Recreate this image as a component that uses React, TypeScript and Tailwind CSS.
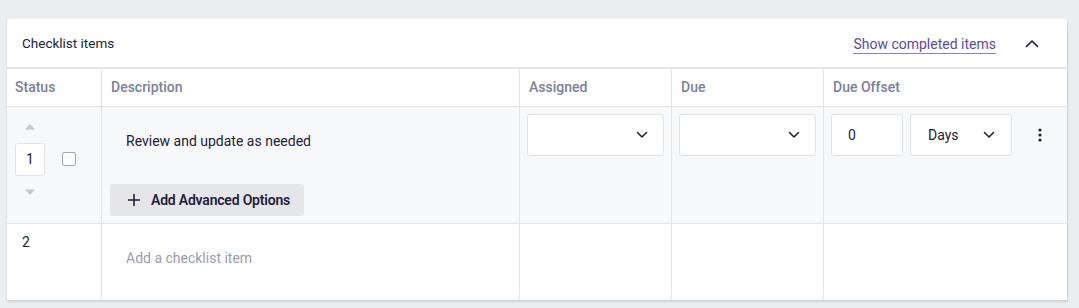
import React from "react";

const Chevron = () => (
  <svg width="12" height="8" viewBox="0 0 12 8" fill="none">
    <path d="M1.5 1.5 L6 6 L10.5 1.5" stroke="#22223a" strokeWidth="1.6" strokeLinecap="round" strokeLinejoin="round" />
  </svg>
);

export default function App() {
  const font = { fontFamily: "Roboto, 'Noto Sans', sans-serif" };
  return (
    <div className="w-[1079px] h-[308px] bg-[#ebeef0] pt-[19px] pl-[6px]" style={font}>
      <div className="w-[1061px] bg-white rounded-t-[4px] shadow-[1px_2px_2px_rgba(0,0,0,0.12)] border-l border-[#dfe1e4]">
        <div className="h-[50px] flex items-center pl-[15px] pr-[28px] border-b-2 border-[#e4e5e8]">
          <div className="text-[13.5px] text-[#22223a] flex-1">Checklist items</div>
          <div className="text-[14px] text-[#5b4a9e] border-b border-[#8f7fc8] leading-[18px] mt-[3px]">Show completed items</div>
          <div className="ml-[29px]">
            <svg width="14" height="9" viewBox="0 0 14 9" fill="none">
              <path d="M1.5 7.5 L7 2 L12.5 7.5" stroke="#22223a" strokeWidth="1.7" strokeLinecap="round" strokeLinejoin="round" />
            </svg>
          </div>
        </div>
        <div className="grid grid-cols-[95px_418px_152px_152px_243px] text-[14px] font-medium text-[#7a819a]">
          <div className="h-[37px] flex items-center pl-[8px] border-r border-[#e4e5e8]">Status</div>
          <div className="h-[37px] flex items-center pl-[9px] border-r border-[#e4e5e8]">Description</div>
          <div className="h-[37px] flex items-center pl-[9px] border-r border-[#e4e5e8]">Assigned</div>
          <div className="h-[37px] flex items-center pl-[9px] border-r border-[#e4e5e8]">Due</div>
          <div className="h-[37px] flex items-center pl-[9px]">Due Offset</div>
        </div>
        <div className="grid grid-cols-[95px_418px_152px_152px_243px] bg-[#f7f8fa] border-t border-[#e4e5e8] h-[117px]">
          <div className="border-r border-[#e4e5e8] flex items-start pl-[8px] pt-[16px] gap-[17px]">
            <div className="flex flex-col items-center gap-[13px]">
              <svg width="12" height="7" viewBox="0 0 12 7"><path d="M1 6.5 L6 1 L11 6.5 Z" fill="#c5c7cf" /></svg>
              <div className="w-[30px] h-[33px] bg-white border border-[#e2e3e7] rounded-[3px] flex items-center justify-center text-[14px] text-[#22223a]">1</div>
              <svg width="12" height="7" viewBox="0 0 12 7"><path d="M1 0.5 L6 6 L11 0.5 Z" fill="#c5c7cf" /></svg>
            </div>
            <div className="mt-[29px] w-[14px] h-[14px] border-[1.5px] border-[#a5a7b0] rounded-[2px] bg-white" />
          </div>
          <div className="border-r border-[#e4e5e8] pl-[8px] flex flex-col">
            <div className="pl-[16px] pt-[26px] text-[14px] text-[#22223a] leading-[16px]">Review and update as needed</div>
            <div className="mt-[35px] w-[194px] h-[32px] bg-[#e6e6ea] rounded-[2px] flex items-center pl-[17px] gap-[10px] text-[14px] font-semibold text-[#22223a]">
              <svg width="14" height="14" viewBox="0 0 14 14"><path d="M7 1 V13 M1 7 H13" stroke="#22223a" strokeWidth="1.6" /></svg>
              <span className="tracking-[-0.2px]">Add Advanced Options</span>
            </div>
          </div>
          <div className="border-r border-[#e4e5e8] px-[7px] pt-[7px]">
            <div className="h-[42px] bg-white border border-[#e2e3e7] rounded-[3px] flex items-center justify-end pr-[15px]"><Chevron /></div>
          </div>
          <div className="border-r border-[#e4e5e8] px-[7px] pt-[7px]">
            <div className="h-[42px] bg-white border border-[#e2e3e7] rounded-[3px] flex items-center justify-end pr-[15px]"><Chevron /></div>
          </div>
          <div className="pl-[7px] pt-[7px] flex items-start gap-[7px]">
            <div className="w-[72px] h-[42px] bg-white border border-[#e2e3e7] rounded-[3px] flex items-center pl-[16px] text-[14px] text-[#22223a]">0</div>
            <div className="w-[102px] h-[42px] bg-white border border-[#e2e3e7] rounded-[3px] flex items-center pl-[17px] pr-[16px] justify-between text-[14px] text-[#22223a]">
              Days <Chevron />
            </div>
            <div className="h-[42px] flex items-center ml-[19px]">
              <svg width="4" height="14" viewBox="0 0 4 14"><circle cx="2" cy="2" r="1.6" fill="#22223a" /><circle cx="2" cy="7" r="1.6" fill="#22223a" /><circle cx="2" cy="12" r="1.6" fill="#22223a" /></svg>
            </div>
          </div>
        </div>
        <div className="grid grid-cols-[95px_418px_152px_152px_243px] border-t border-[#e4e5e8] h-[77px]">
          <div className="border-r border-[#e4e5e8] pl-[15px] pt-[8px] text-[14px] text-[#22223a]">2</div>
          <div className="border-r border-[#e4e5e8] pl-[24px] pt-[24px] text-[14px] text-[#9a9cab]">Add a checklist item</div>
          <div className="border-r border-[#e4e5e8]" />
          <div className="border-r border-[#e4e5e8]" />
          <div />
        </div>
      </div>
    </div>
  );
}
